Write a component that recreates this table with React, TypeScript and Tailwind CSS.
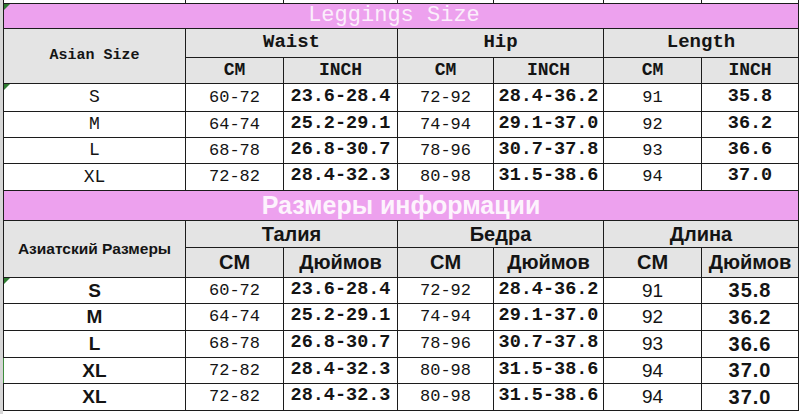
import React from 'react';

const rows = [
  ['S', '60-72', '23.6-28.4', '72-92', '28.4-36.2', '91', '35.8'],
  ['M', '64-74', '25.2-29.1', '74-94', '29.1-37.0', '92', '36.2'],
  ['L', '68-78', '26.8-30.7', '78-96', '30.7-37.8', '93', '36.6'],
  ['XL', '72-82', '28.4-32.3', '80-98', '31.5-38.6', '94', '37.0'],
];
const rowsRu = [...rows, rows[3]];

const cell = 'border border-[#1c1c1c] p-0 text-center align-middle leading-none text-[#141414] whitespace-nowrap';
const mono = "font-['Liberation_Mono',monospace]";
const sans = "font-['Liberation_Sans',Arial,sans-serif]";
const gray = 'bg-[#e4e4e4]';

function Corner() {
  return <span className="absolute left-0 top-0 h-0 w-0 border-l-[3px] border-t-[3px] border-l-[#2f7d32] border-t-[#2f7d32] border-r-[3px] border-b-[3px] border-r-transparent border-b-transparent" />;
}

export default function App() {
  const heights1 = ['h-[28px]', 'h-[26px]', 'h-[26px]', 'h-[27px]'];
  const heights2 = ['h-[26px]', 'h-[27px]', 'h-[27px]', 'h-[26px]', 'h-[27px]'];

  return (
    <div className="flex h-[414px] w-[800px] overflow-hidden bg-white">
      <div className="w-[3px] shrink-0 bg-[#d6d6d6]" />
      <table className="h-fit w-[795px] table-fixed border-collapse">
        <colgroup>
          <col className="w-[182px]" />
          <col className="w-[98px]" />
          <col className="w-[114px]" />
          <col className="w-[96px]" />
          <col className="w-[110px]" />
          <col className="w-[98px]" />
          <col className="w-[97px]" />
        </colgroup>
        <tbody>
          <tr>
            {Array.from({ length: 7 }).map((_, i) => (
              <td key={i} className={`${cell} h-[3px] border-t-0`} />
            ))}
          </tr>

          {/* Leggings size, english */}
          <tr>
            <td colSpan={7} className={`${cell} relative h-[25px] bg-[#eda1ee] pr-[14px]`}>
              <Corner />
              <span className={`${mono} text-[22px] text-[#fbeefb]`}>Leggings Size</span>
            </td>
          </tr>
          <tr>
            <td rowSpan={2} className={`${cell} ${gray} ${mono} text-[15px] font-bold`}>Asian Size</td>
            <td colSpan={2} className={`${cell} ${gray} ${mono} h-[29px] text-[19px] font-bold`}>Waist</td>
            <td colSpan={2} className={`${cell} ${gray} ${mono} text-[19px] font-bold`}>Hip</td>
            <td colSpan={2} className={`${cell} ${gray} ${mono} text-[19px] font-bold`}>Length</td>
          </tr>
          <tr>
            {['CM', 'INCH', 'CM', 'INCH', 'CM', 'INCH'].map((t, i) => (
              <td key={i} className={`${cell} ${gray} ${mono} h-[26px] text-[18px] font-bold`}>{t}</td>
            ))}
          </tr>
          {rows.map((r, ri) => (
            <tr key={ri}>
              <td className={`${cell} ${mono} ${heights1[ri]} relative text-[18px]`}>
                {ri === 0 && <Corner />}
                {r[0]}
              </td>
              <td className={`${cell} ${mono} text-[17px] text-[#444]`}>{r[1]}</td>
              <td className={`${cell} ${mono} text-[18.5px] font-bold`}>{r[2]}</td>
              <td className={`${cell} ${mono} text-[17px] text-[#444]`}>{r[3]}</td>
              <td className={`${cell} ${mono} text-[18.5px] font-bold`}>{r[4]}</td>
              <td className={`${cell} ${mono} text-[17px] text-[#444]`}>{r[5]}</td>
              <td className={`${cell} ${mono} text-[18.5px] font-bold`}>{r[6]}</td>
            </tr>
          ))}

          {/* Размеры, russian */}
          <tr>
            <td colSpan={7} className={`${cell} h-[30px] bg-[#eda1ee]`}>
              <span className={`${sans} text-[25px] font-bold text-[#fdf3fd]`}>Размеры информации</span>
            </td>
          </tr>
          <tr>
            <td rowSpan={2} className={`${cell} ${gray} ${sans} text-[15.5px] font-bold`}>Азиатский Размеры</td>
            <td colSpan={2} className={`${cell} ${gray} ${sans} h-[27px] text-[20px] font-bold`}>Талия</td>
            <td colSpan={2} className={`${cell} ${gray} ${sans} text-[20px] font-bold`}>Бедра</td>
            <td colSpan={2} className={`${cell} ${gray} ${sans} text-[20px] font-bold`}>Длина</td>
          </tr>
          <tr>
            {['CM', 'Дюймов', 'CM', 'Дюймов', 'CM', 'Дюймов'].map((t, i) => (
              <td key={i} className={`${cell} ${gray} ${sans} h-[30px] text-[20px] font-bold`}>{t}</td>
            ))}
          </tr>
          {rowsRu.map((r, ri) => (
            <tr key={ri}>
              <td className={`${cell} ${sans} ${heights2[ri]} relative text-[19px] font-bold ${ri === 3 ? 'border-l-[#3d8b3d]' : ''}`}>
                {ri === 0 && <Corner />}
                {r[0]}
              </td>
              <td className={`${cell} ${mono} text-[17px] text-[#444]`}>{r[1]}</td>
              <td className={`${cell} ${mono} text-[18.5px] font-bold`}>{r[2]}</td>
              <td className={`${cell} ${mono} text-[17px] text-[#444]`}>{r[3]}</td>
              <td className={`${cell} ${mono} text-[18.5px] font-bold`}>{r[4]}</td>
              <td className={`${cell} ${sans} text-[19px] text-[#2a2a2a]`}>{r[5]}</td>
              <td className={`${cell} ${sans} text-[20px] font-bold tracking-[1px]`}>{r[6]}</td>
            </tr>
          ))}
        </tbody>
      </table>
    </div>
  );
}
